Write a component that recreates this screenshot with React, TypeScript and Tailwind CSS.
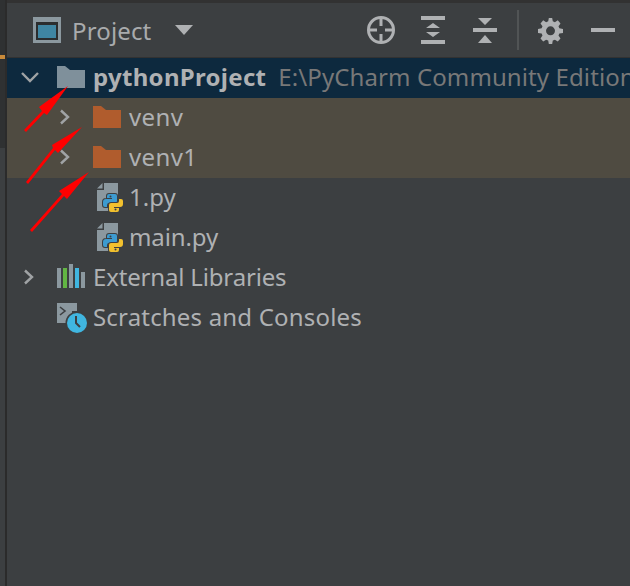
const Chevron = ({ open }: { open?: boolean }) => (
  <svg width="18" height="18" viewBox="0 0 18 18" fill="none" stroke="#a0a3a5" strokeWidth="2.4">
    <path d={open ? "M1 5l8 8 8-8" : "M3 2.500l7 6.500-7 6.500"} />
  </svg>
)

const Folder = ({ color }: { color: string }) => (
  <svg className="shrink-0" width="28" height="22" viewBox="0 0 28 22" fill={color}>
    <path d="M0 0h8l5 4h15v18H0z" />
  </svg>
)

const pyBlue = "M12 11h6a2 2 0 0 1 2 2v5a2 2 0 0 1-2 2h-6a2 2 0 0 0-2 2v2H8a2 2 0 0 1-2-2v-3a3 3 0 0 1 3-3h6v-1h-5v-2a2 2 0 0 1 2-2z"

const PyFile = () => (
  <svg className="mt-[2px]" width="28" height="30" viewBox="0 0 28 30">
    <path d="M7 0h14v28H0V7h7z" fill="#8b989f" />
    <path d="M0 5.500L5.500 0v5.500z" fill="#8b989f" />
    <g stroke="#3c3f41" strokeWidth="2" paintOrder="stroke">
      <path d={pyBlue} fill="#3c9bd0" />
      <path d={pyBlue} fill="#f2c12e" transform="rotate(180 16 20)" />
    </g>
    <circle cx="13.500" cy="13.500" r="1" fill="#3c3f41" />
    <circle cx="18.500" cy="26.500" r="1" fill="#3c3f41" />
  </svg>
)

const Libraries = () => (
  <svg className="mb-[2px]" width="28" height="24" viewBox="0 0 28 24">
    <rect x="0" y="4" width="4" height="20" fill="#8b989f" />
    <rect x="6" y="4" width="4" height="20" fill="#62b543" />
    <rect x="12" y="0" width="4" height="24" fill="#8b989f" />
    <rect x="18" y="4" width="4" height="20" fill="#40b6e0" />
    <rect x="24" y="8" width="4" height="16" fill="#8b989f" />
  </svg>
)

const Scratches = () => (
  <svg className="mt-[2px]" width="31" height="30" viewBox="0 0 31 30">
    <path d="M0 0h20v8H15v12H0z" fill="#8b989f" />
    <path d="M3 4l5 4-5 4" fill="none" stroke="#3c3f41" strokeWidth="1.600" />
    <circle cx="20" cy="20" r="11.500" fill="#3c3f41" />
    <circle cx="20" cy="20" r="10" fill="#40b6e0" />
    <path d="M19 13v7l4 4" fill="none" stroke="#3c3f41" strokeWidth="2" />
  </svg>
)

const Arrow = ({ points }: { points: string }) => <polygon points={points} fill="#ff0000" />

export default function App() {
  return (
    <div className="relative flex h-[586px] w-[630px] overflow-hidden bg-[#3c3f41] font-['Noto_Sans',sans-serif] text-[24px] text-[#afb1b3]">
      <div className="flex w-[5px] shrink-0 flex-col">
        <div className="h-[55px] bg-[#2f3132]" />
        <div className="h-[4px] bg-[#c98a3a]" />
        <div className="h-[89px] bg-[#2f3132]" />
        <div className="flex-1 bg-[#3c3f41]" />
      </div>
      <div className="w-[2px] shrink-0 bg-[#2b2b2b]" />
      <div className="flex min-w-0 flex-1 flex-col">
        <div className="h-[3px] bg-[#323232]" />
        <header className="flex h-[55px] items-center border-b border-[#323232] pl-[26px] pr-[15px]">
          <svg width="28" height="26" viewBox="0 0 28 26">
            <rect width="28" height="26" fill="#8b989f" />
            <rect x="3" y="5" width="22" height="18" fill="#2b2d2e" />
            <rect x="5" y="8" width="18" height="13" fill="#3f86a3" />
          </svg>
          <span className="ml-[11px] mt-[1px] tracking-[0.15px] text-[#a9abad]">Project</span>
          <svg className="ml-[24px]" width="18" height="10" viewBox="0 0 18 10" fill="#afb1b3">
            <path d="M0 0h18l-9 10z" />
          </svg>
          <div className="ml-auto flex items-center">
            <svg width="28" height="28" viewBox="0 0 28 28" fill="none" stroke="#afb1b3" strokeWidth="3">
              <circle cx="14" cy="14" r="12.500" />
              <path d="M14 2v8M14 18v8M2 14h8M18 14h8" />
            </svg>
            <svg className="ml-[26px]" width="24" height="28" viewBox="0 0 24 28" fill="#afb1b3">
              <path d="M0 0h24v4H0zM0 24h24v4H0zM12 7l7 5H5zM12 21l-7-5h14z" />
            </svg>
            <svg className="ml-[28px]" width="24" height="25" viewBox="0 0 24 25" fill="#afb1b3">
              <path d="M5 0h14l-7 7zM0 10h24v4H0zM12 17l7 8H5z" />
            </svg>
            <div className="ml-[20px] h-[40px] w-[2px] bg-[#515455]" />
            <svg className="ml-[19px]" width="25" height="27" viewBox="0 0 24 24" fill="#afb1b3">
              <path fillRule="evenodd" d="M13.600 0l.6 3.200 2 .8L19 2.200l2.600 3-1.900 2.700.8 2 3.500.6v3.800l-3.500.6-.8 2 1.900 2.700-2.600 3-2.800-1.800-2 .8-.6 3.400h-3.200l-.6-3.400-2-.8L5 22.600l-2.600-3 1.900-2.700-.8-2L0 14.300v-3.800l3.500-.6.8-2-1.900-2.700 2.600-3 2.800 1.800 2-.8.6-3.200zM12 8a4.300 4.300 0 1 0 0 8.600A4.300 4.300 0 0 0 12 8z" />
            </svg>
            <div className="ml-[28px] h-[4px] w-[24px] bg-[#afb1b3]" />
          </div>
        </header>
        <div className="flex h-[40px] items-center overflow-hidden whitespace-nowrap bg-[#0d293e] pb-[2px]">
          <div className="ml-[14px] flex w-[36px] shrink-0"><Chevron open /></div>
          <Folder color="#7f909b" />
          <span className="ml-[8px] font-bold tracking-[0.3px] text-[#afb1b3]">pythonProject</span>
          <span className="ml-[12px] tracking-[0.1px] text-[#787878]">E:\PyCharm Community Edition</span>
        </div>
        <div className="flex h-[40px] items-center bg-[#4f4b41] pb-[2px]">
          <div className="ml-[51px] flex w-[35px] shrink-0"><Chevron /></div>
          <Folder color="#b05c2d" />
          <span className="ml-[8px] tracking-[0.4px]">venv</span>
        </div>
        <div className="flex h-[40px] items-center bg-[#4f4b41] pb-[2px]">
          <div className="ml-[51px] flex w-[35px] shrink-0"><Chevron /></div>
          <Folder color="#b05c2d" />
          <span className="ml-[8px] tracking-[0.4px]">venv1</span>
        </div>
        <div className="flex h-[40px] items-center pb-[2px] pl-[90px]">
          <PyFile />
          <span className="ml-[4px]">1.py</span>
        </div>
        <div className="flex h-[40px] items-center pb-[2px] pl-[90px]">
          <PyFile />
          <span className="ml-[4px] tracking-[-0.1px]">main.py</span>
        </div>
        <div className="flex h-[40px] items-center pb-[2px]">
          <div className="ml-[15px] flex w-[35px] shrink-0"><Chevron /></div>
          <Libraries />
          <span className="ml-[8px] tracking-[-0.17px]">External Libraries</span>
        </div>
        <div className="flex h-[40px] items-center pb-[2px] pl-[50px]">
          <Scratches />
          <span className="ml-[5px] tracking-[0.18px]">Scratches and Consoles</span>
        </div>
      </div>
      <svg className="pointer-events-none absolute left-0 top-0" width="630" height="586">
        <Arrow points="68,86 47,115 44,113 26,132 24,130 42,111 39,107" />
        <Arrow points="82,127 58,153 55,150 28,184 26,182 53,148 52,145" />
        <Arrow points="89,172 67,199 64,196 32,232 30,230 62,194 59,191" />
      </svg>
    </div>
  )
}
